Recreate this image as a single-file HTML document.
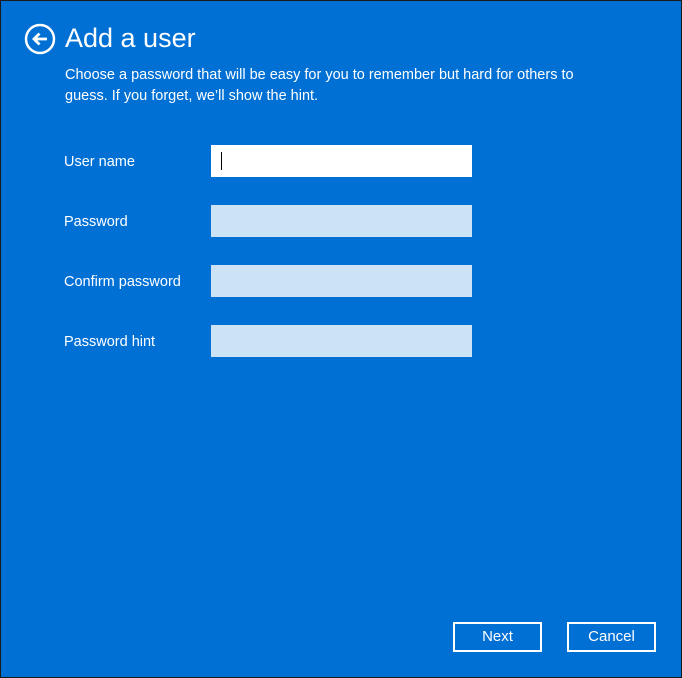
<!DOCTYPE html>
<html><head><style>
body{margin:0;width:682px;height:678px;overflow:hidden;font-family:"Liberation Sans",sans-serif}
.f{position:absolute;left:0;top:0;width:680px;height:676px;background:#0070d4;border:1px solid #1a1a1a;color:#fff}
.t{position:absolute;left:64px;top:22px;font-size:27px}
.p{position:absolute;left:64px;top:64px;font-size:14.5px;line-height:21px;width:535px}
.l{position:absolute;left:63px;font-size:14.5px}
.i{position:absolute;left:210px;width:261px;height:32px;background:#cce3f6}
.b{position:absolute;top:621px;width:85px;height:26px;border:2px solid #fff;font-size:15px;text-align:center;line-height:26px}
</style></head><body><div class="f">
<svg style="position:absolute;left:23px;top:22px" width="32" height="32" viewBox="0 0 32 32"><circle cx="16" cy="16" r="14" fill="none" stroke="#fff" stroke-width="2.5"/><path d="M23 16H10M15.5 10.5L10 16l5.5 5.5" fill="none" stroke="#fff" stroke-width="2.8"/></svg>
<div class="t">Add a user</div>
<div class="p">Choose a password that will be easy for you to remember but hard for others to guess. If you forget, we’ll show the hint.</div>
<div class="l" style="top:153px">User name</div>
<div class="l" style="top:213px">Password</div>
<div class="l" style="top:273px">Confirm password</div>
<div class="l" style="top:333px">Password hint</div>
<div class="i" style="top:144px;background:#fff"><div style="position:absolute;left:10px;top:7px;width:1px;height:18px;background:#000"></div></div>
<div class="i" style="top:204px"></div>
<div class="i" style="top:264px"></div>
<div class="i" style="top:324px"></div>
<div class="b" style="left:452px">Next</div>
<div class="b" style="left:566px">Cancel</div>
</div></body></html>
